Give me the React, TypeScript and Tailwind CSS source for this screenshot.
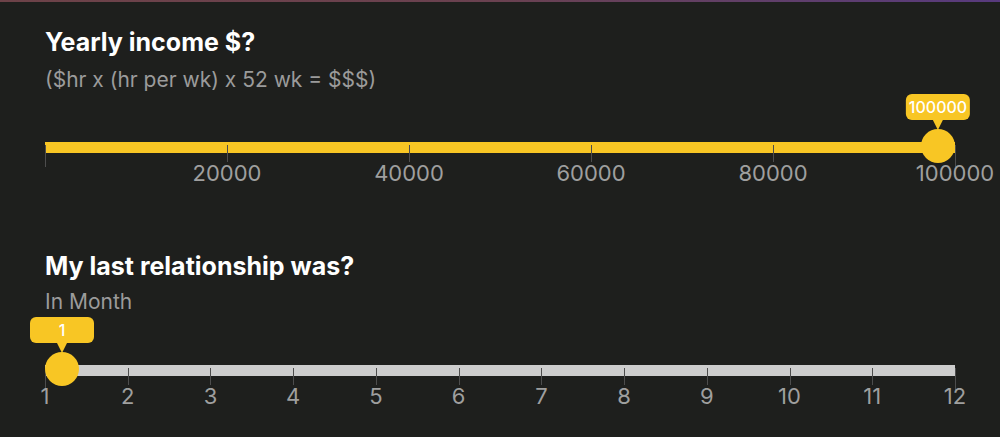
import React from "react";

type SliderProps = {
    min: number
    max: number
    value: number
    marks: number[]
    showLabel: (m: number) => boolean
    active?: boolean
}

const THUMB = 34;

const Slider = ({ min, max, value, marks, showLabel, active }: SliderProps) => {
    const pct = (value - min) / (max - min);
    const pos = (v: number) => ((v - min) / (max - min)) * 100;
    return (
        <div className="w-full">
            <div className="relative h-[11px] w-full">
                <div className="absolute inset-0 bg-[#cdcdcd]" />
                <div
                    className="absolute left-0 top-0 h-full bg-[#f8c624]"
                    style={{ width: `${active ? pct * 100 : 0}%` }}
                />
                {marks.map((m, i) => {
                    const end = i === 0 || i === marks.length - 1;
                    return (
                        <div
                            key={m}
                            className={
                                end
                                    ? "absolute top-[3px] h-[22px] w-px bg-[#4d4d4d]"
                                    : "absolute top-[3px] h-[17px] w-px bg-[#4d4d4d]"
                            }
                            style={{ left: `${pos(m)}%` }}
                        />
                    );
                })}
                <div
                    className="absolute -top-[13px]"
                    style={{ left: `calc(${THUMB / 2}px + (100% - ${THUMB}px) * ${pct})` }}
                >
                    <div className="absolute bottom-[-1px] left-0 -translate-x-1/2 flex flex-col items-center">
                        <div className="h-[26px] min-w-[64px] px-[3px] rounded-md bg-[#f8c624] flex items-center justify-center text-white text-[16px] font-medium">
                            {value}
                        </div>
                        <div className="w-0 h-0 border-x-[5px] border-x-transparent border-t-[10px] border-t-[#f8c624]" />
                    </div>
                    <div className="absolute top-0 left-0 -translate-x-1/2 w-[34px] h-[34px] rounded-full bg-[#f8c624]" />
                </div>
            </div>
            <div className="relative mt-[7px] h-[26px] w-full">
                {marks.filter(showLabel).map((m) => (
                    <span
                        key={m}
                        className="absolute top-0 -translate-x-1/2 text-[22px] leading-[26px] text-[#9f9f9f]"
                        style={{ left: `${pos(m)}%` }}
                    >
                        {m}
                    </span>
                ))}
            </div>
        </div>
    );
};

const income = [0, 20000, 40000, 60000, 80000, 100000];
const months = [1, 2, 3, 4, 5, 6, 7, 8, 9, 10, 11, 12];

export default function App() {
    return (
        <div
            className="w-full h-[437px] bg-[#1e1f1d] flex flex-col overflow-hidden"
            style={{ fontFamily: "Inter, 'Liberation Sans', sans-serif" }}
        >
            <div className="h-[2px] w-full bg-gradient-to-r from-[#6d4248] via-[#6a4150] to-[#583a7e]" />
            <div className="px-[45px] flex flex-col">
                <p className="mt-[25px] text-[25px] leading-[30px] font-bold text-white">
                    Yearly income $?
                </p>
                <p className="mt-[10px] text-[21px] leading-[26px] text-[#9b9b9b]">
                    ($hr x (hr per wk) x 52 wk = $$$)
                </p>
                <div className="mt-[49px]">
                    <Slider
                        min={0}
                        max={100000}
                        value={100000}
                        marks={income}
                        showLabel={(m) => m !== 0}
                        active
                    />
                </div>
                <p className="mt-[65px] text-[25px] leading-[30px] font-bold text-white">
                    My last relationship was?
                </p>
                <p className="mt-[8px] text-[21px] leading-[26px] text-[#9b9b9b]">
                    In Month
                </p>
                <div className="mt-[50px]">
                    <Slider
                        min={1}
                        max={12}
                        value={1}
                        marks={months}
                        showLabel={() => true}
                    />
                </div>
            </div>
        </div>
    );
}
